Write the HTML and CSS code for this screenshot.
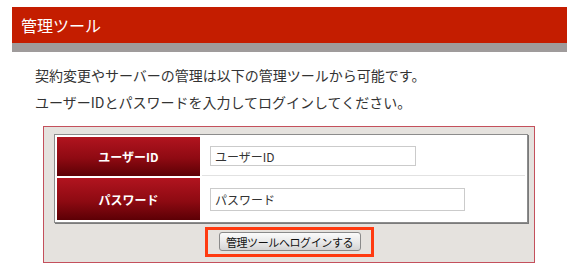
FILE: index.html
```html
<!DOCTYPE html>
<html lang="ja">
<head>
  <meta charset="UTF-8" />
  <title>管理ツール</title>
  <link rel="stylesheet" href="styles.css">
</head>
<body>
  <div class="page-head">
    <h1>管理ツール</h1>
  </div>

  <p class="lead">契約変更やサーバーの管理は以下の管理ツールから可能です。</p>
  <p class="lead">ユーザーIDとパスワードを入力してログインしてください。</p>

  <div class="login-box">
    <table class="login-table">
      <tr class="row-id">
        <th>ユーザーID</th>
        <td><input type="text" class="field field-id" value="ユーザーID"></td>
      </tr>
      <tr class="row-pw">
        <th>パスワード</th>
        <td><input type="text" class="field field-pw" value="パスワード"></td>
      </tr>
    </table>

    <div class="submit-row">
      <span class="highlight">
        <button class="login-btn">管理ツールへログインする</button>
      </span>
    </div>
  </div>
</body>
</html>
```

FILE: styles.css
```css
:root {
  --red:      #c41d00;
  --bar-grey: #9f9b9b;
  --box-bg:   #e5e2de;
  --box-line: #c4505c;
  --text:     #333;
}

* { margin: 0; padding: 0; box-sizing: border-box; }

html, body {
  width: 100%;
  height: 100%;
  background: #fff;
  overflow: hidden;
  font-family: "Noto Sans CJK JP", "Noto Sans", sans-serif;
  color: var(--text);
}

.page-head {
  margin: 7px 13px 0 12px;
  height: 45px;
  background: var(--red);
  border-bottom: 9px solid var(--bar-grey);
}

.page-head h1 {
  font-size: 16px;
  font-weight: normal;
  color: #fff;
  line-height: 36px;
  padding-left: 9px;
}

.lead {
  font-size: 14px;
  line-height: 18px;
  padding-left: 35px;
}

.lead:first-of-type { margin-top: 14px; }
.lead + .lead { margin-top: 9px; }

.login-box {
  margin: 15px 0 0 43px;
  width: 492px;
  height: 137px;
  background: var(--box-bg);
  border: 1px solid var(--box-line);
  padding: 7px 6px 0 10px;
}

.login-table {
  width: 474px;
  background: #fff;
  border: 1px solid #8c8c8c;
  box-shadow: 1px 1px 0 #7a7a7a;
  border-spacing: 2px;
}

.login-table th {
  width: 143px;
  color: #fff;
  font-size: 12px;
  font-weight: bold;
  text-align: center;
  background: linear-gradient(#b1141f, #8e0a12 55%, #5c0005);
}

.login-table td {
  padding-left: 8px;
}

.row-id th, .row-id td { height: 39px; }
.row-pw th, .row-pw td { height: 42px; }

.row-id td { border-bottom: 1px solid #e2e2e2; }

.field {
  display: block;
  font-family: inherit;
  font-size: 12px;
  color: var(--text);
  border: 1px solid #cbcbcb;
  padding: 0 4px;
  background: #fff;
}

.field-id { width: 206px; height: 20px; }
.field-pw { width: 255px; height: 23px; }

.submit-row {
  margin-top: 4px;
  text-align: center;
}

.highlight {
  display: inline-block;
  border: 3px solid #ff3a10;
  padding: 2px 10px 3px 11px;
  margin-left: -4px;
}

.login-btn {
  display: block;
  width: 142px;
  height: 19px;
  font-family: inherit;
  font-size: 11px;
  letter-spacing: -0.4px;
  color: #111;
  border: 1px solid #8a8a8a;
  border-radius: 3px;
  background: linear-gradient(#fbfbfb, #e6e6e6 60%, #d4d4d4);
}
```
